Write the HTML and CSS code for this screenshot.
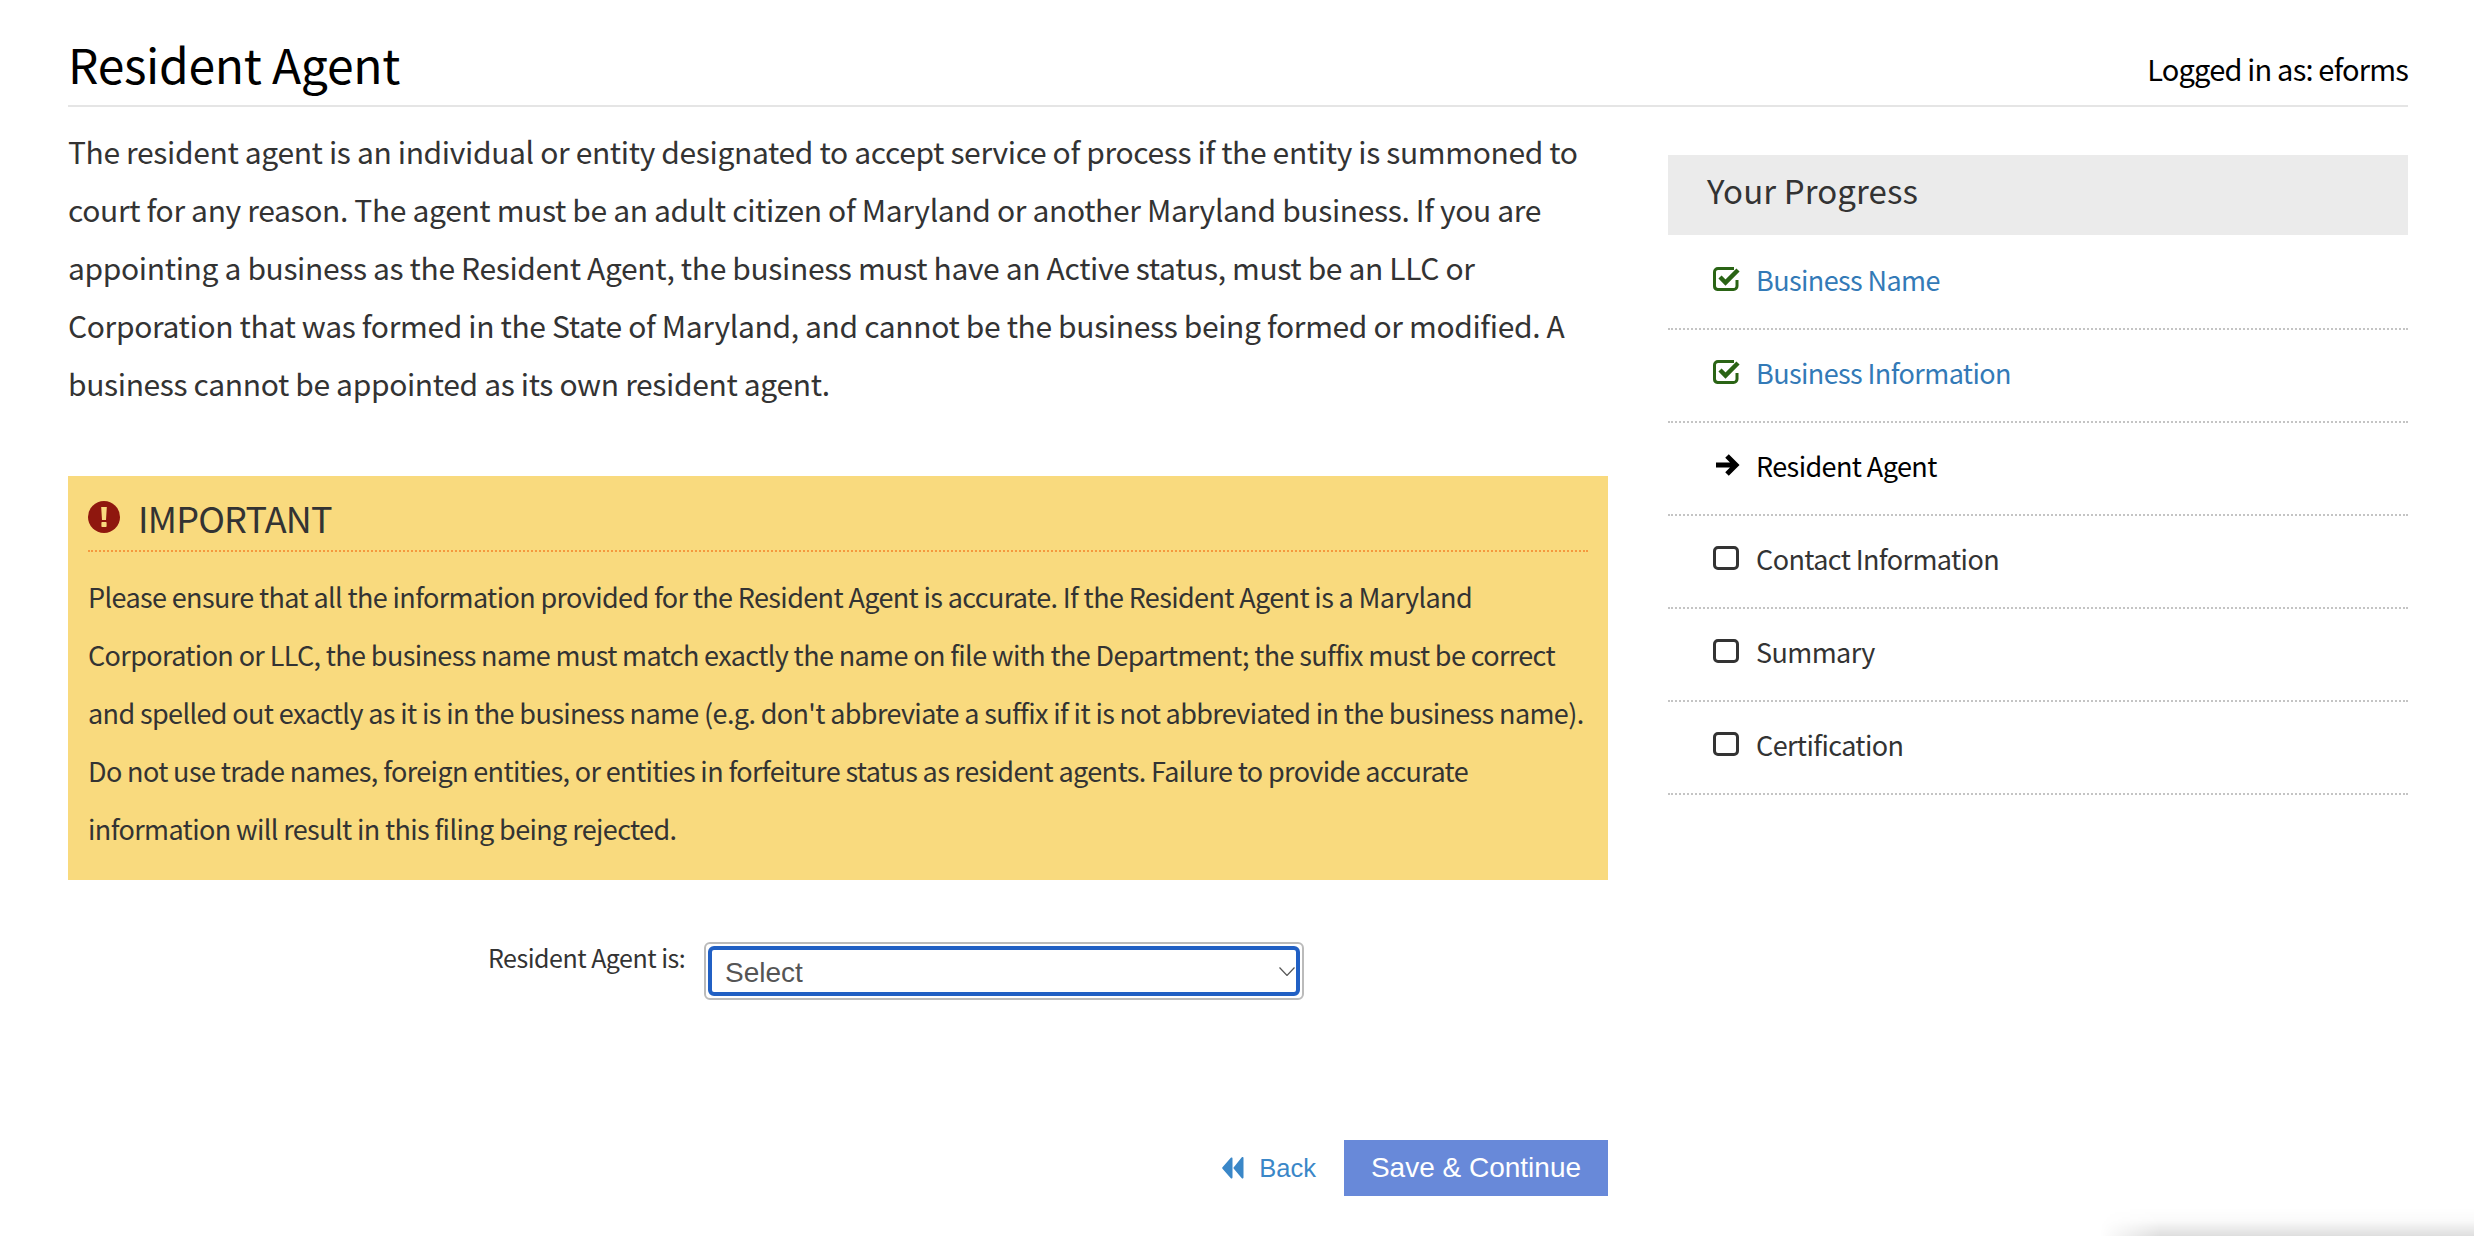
FILE: index.html
```html
<!DOCTYPE html>
<html lang="en">
<head>
<meta charset="utf-8">
<title>Resident Agent</title>
<link rel="stylesheet" href="styles.css">
</head>
<body>
<div class="page">
  <header class="top">
    <h1>Resident Agent</h1>
    <div class="user">Logged in as: eforms</div>
  </header>
  <div class="cols">
    <main class="main">
      <p class="intro">The resident agent is an individual or entity designated to accept service of process if the entity is summoned to court for any reason. The agent must be an adult citizen of Maryland or another Maryland business. If you are appointing a business as the Resident Agent, the business must have an Active status, must be an LLC or Corporation that was formed in the State of Maryland, and cannot be the business being formed or modified. A business cannot be appointed as its own resident agent.</p>
      <section class="alert">
        <h2 class="alert-title">
          <svg class="alert-icon" viewBox="0 0 32 32"><circle cx="16" cy="16" r="16" fill="#8f170e"/><path d="M13.2 6h5.6l-.8 13h-4z" fill="#f9da7e"/><rect x="13.4" y="21" width="5.2" height="5" rx=".8" fill="#f9da7e"/></svg>
          IMPORTANT
        </h2>
        <p class="alert-text">Please ensure that all the information provided for the Resident Agent is accurate. If the Resident Agent is a Maryland Corporation or LLC, the business name must match exactly the name on file with the Department; the suffix must be correct and spelled out exactly as it is in the business name (e.g. don't abbreviate a suffix if it is not abbreviated in the business name). Do not use trade names, foreign entities, or entities in forfeiture status as resident agents. Failure to provide accurate information will result in this filing being rejected.</p>
      </section>
      <div class="field">
        <label class="field-label">Resident Agent is:</label>
        <div class="select-ring">
          <div class="select"><span>Select</span>
            <svg class="chev" viewBox="0 0 16 9"><path d="M.5 .5l7.500 8 7.500-8" fill="none" stroke="#555" stroke-width="1.2"/></svg>
          </div>
        </div>
      </div>
      <div class="actions">
        <a class="back"><svg class="back-icon" viewBox="0 0 22 22"><path d="M10.500 1.500v19a1 1 0 0 1-1.700.7L.5 11.700a1 1 0 0 1 0-1.400L8.800.8a1 1 0 0 1 1.700.7zM21.500 1.500v19a1 1 0 0 1-1.700.7l-8-9.500a1 1 0 0 1 0-1.400l8-10a1 1 0 0 1 1.700.7z" fill="#3a87c8"/></svg>Back</a>
        <button class="save">Save &amp; Continue</button>
      </div>
    </main>
    <aside class="side">
      <h3 class="side-head">Your Progress</h3>
      <ul class="steps">
        <li class="step"><svg class="ic" viewBox="0 0 27 24"><path d="M24 13v6a3.500 3.500 0 0 1-3.500 3.500h-16A3.500 3.500 0 0 1 1.500 19V5A3.500 3.500 0 0 1 5 1.500h16" fill="none" stroke="#2a6415" stroke-width="3"/><path d="M7 10l5.500 5.500L25 3" fill="none" stroke="#2a6415" stroke-width="4.500"/></svg><a class="link">Business Name</a></li>
        <li class="step"><svg class="ic" viewBox="0 0 27 24"><path d="M24 13v6a3.500 3.500 0 0 1-3.500 3.500h-16A3.500 3.500 0 0 1 1.500 19V5A3.500 3.500 0 0 1 5 1.500h16" fill="none" stroke="#2a6415" stroke-width="3"/><path d="M7 10l5.500 5.500L25 3" fill="none" stroke="#2a6415" stroke-width="4.500"/></svg><a class="link">Business Information</a></li>
        <li class="step current"><svg class="ic" viewBox="0 0 27 24"><path d="M3 12h20M14 3l9 9-9 9" fill="none" stroke="#000" stroke-width="5"/></svg>Resident Agent</li>
        <li class="step"><svg class="ic" viewBox="0 0 27 24"><rect x="1.500" y="1.500" width="23" height="21" rx="3.500" fill="none" stroke="#333" stroke-width="3"/></svg>Contact Information</li>
        <li class="step"><svg class="ic" viewBox="0 0 27 24"><rect x="1.500" y="1.500" width="23" height="21" rx="3.500" fill="none" stroke="#333" stroke-width="3"/></svg>Summary</li>
        <li class="step"><svg class="ic" viewBox="0 0 27 24"><rect x="1.500" y="1.500" width="23" height="21" rx="3.500" fill="none" stroke="#333" stroke-width="3"/></svg>Certification</li>
      </ul>
    </aside>
  </div>
</div>
<div class="corner-shadow"></div>
</body>
</html>
```
FILE: styles.css
```css
* { box-sizing: border-box; }
html, body { height: 100%; }
body {
  margin: 0;
  background: #fff;
  color: #333;
  font-family: "Noto Sans CJK SC", "Noto Sans", sans-serif;
  overflow: hidden;
}
.page { padding: 0 66px 0 68px; }
.top {
  display: flex;
  justify-content: space-between;
  align-items: flex-end;
  height: 107px;
  border-bottom: 2px solid #e5e5e5;
}
h1 { margin: 0 0 9px; font-size: 48px; line-height: 66px; font-weight: 400; color: #000; letter-spacing: -.3px; }
.user { font-size: 29px; line-height: 40px; color: #000; margin-bottom: 17px; letter-spacing: -.8px; }
.cols { display: flex; justify-content: space-between; }
.main { width: 1540px; }
.intro { margin: 15px 0 0; font-size: 30px; line-height: 58px; letter-spacing: -.35px; }
.alert { margin-top: 64px; height: 404px; background: #f9da7e; padding: 20px; }
.alert-title {
  display: flex; align-items: center; gap: 18px;
  margin: 0; height: 56px; padding-bottom: 12px;
  font-size: 36px; font-weight: 400; letter-spacing: -.8px;
  border-bottom: 2px dotted #f5993f;
}
.alert-icon { width: 32px; height: 32px; }
.alert-text { margin: 16px 0 0; font-size: 27px; line-height: 58px; letter-spacing: -.63px; }
.field { display: flex; margin-top: 62px; padding-left: 420px; }
.field-label { width: 216px; font-size: 25px; line-height: 36px; margin-top: -3px; letter-spacing: -.5px; }
.select-ring { width: 600px; height: 58px; border: 2px solid #bbb; border-radius: 6px; padding: 2px; }
.select {
  height: 100%; border: 4px solid #2160c4; border-radius: 6px;
  display: flex; align-items: center; justify-content: space-between;
  padding: 0 1px 0 13px;
  font-family: "Liberation Sans", Arial, sans-serif; font-size: 28px; color: #555;
}
.select span { position: relative; top: 2px; }
.chev { width: 16px; height: 9px; }
.actions { display: flex; justify-content: flex-end; align-items: center; margin-top: 140px; }
.back { display: flex; align-items: center; color: #3a87c8; font-family: "Liberation Sans", Arial, sans-serif; font-size: 25.500px; margin-right: 28px; }
.back-icon { width: 22px; height: 22px; margin-right: 15px; }
.save {
  width: 264px; height: 56px; border: 0; background: #6889d9; color: #fff;
  font-family: "Liberation Sans", Arial, sans-serif; font-size: 28px; padding: 0;
}
.side { width: 740px; padding-top: 48px; }
.side-head { margin: 0; height: 80px; background: #ebebeb; padding-left: 39px; font-size: 33px; line-height: 70px; font-weight: 400; letter-spacing: .1px; }
.steps { list-style: none; margin: 2px 0 0; padding: 0; }
.step {
  display: flex; align-items: center; height: 93px; padding-bottom: 6px;
  padding-left: 45px; font-size: 27px; letter-spacing: -.6px;
  border-bottom: 2px dotted #c4c4c4;
}
.ic { width: 27px; height: 24px; margin-right: 16px; position: relative; top: -1px; }
.link { color: #337ab7; }
.current { color: #000; }
.corner-shadow {
  position: absolute; left: 2100px; right: 0; bottom: 0; height: 28px;
  background: linear-gradient(to bottom, rgba(0,0,0,0), rgba(0,0,0,.02) 45%, rgba(0,0,0,.13));
  -webkit-mask-image: linear-gradient(to right, transparent, #000 60px);
  mask-image: linear-gradient(to right, transparent, #000 60px);
}
```
